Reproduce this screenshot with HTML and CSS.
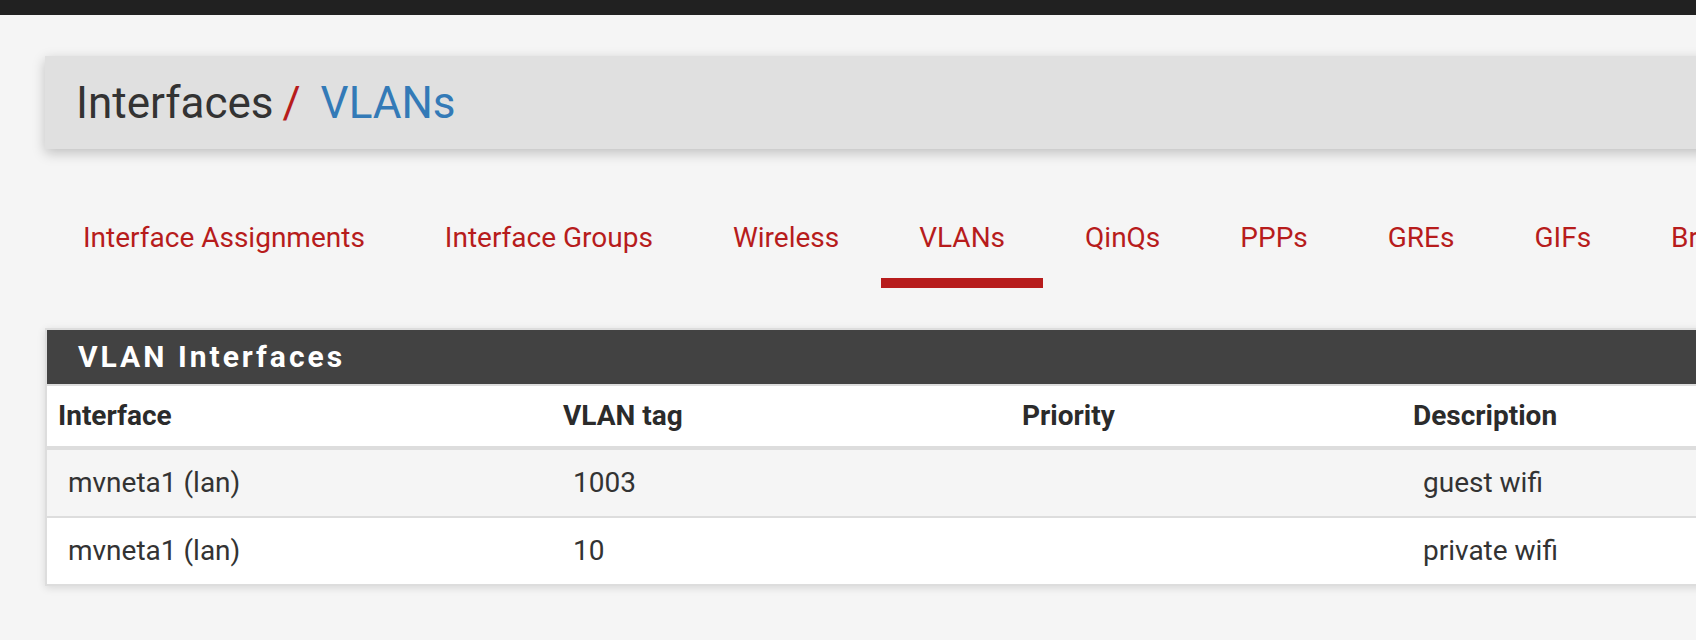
FILE: index.html
```html
<!DOCTYPE html>
<html lang="en">
<head>
    <meta charset="UTF-8">
    <title>Interfaces: VLANs</title>
    <link rel="stylesheet" href="styles.css">
</head>
<body>
<div class="topbar"></div>
<div class="content">
    <div class="page-header">
        <h1 class="breadcrumb">
            <span>Interfaces</span><span class="crumb-sep">/&nbsp;</span><a class="crumb-current" href="#">VLANs</a>
        </h1>
    </div>

    <ul class="tabs">
        <li><a href="#">Interface Assignments</a></li>
        <li><a href="#">Interface Groups</a></li>
        <li><a href="#">Wireless</a></li>
        <li><a class="active" href="#">VLANs</a></li>
        <li><a href="#">QinQs</a></li>
        <li><a href="#">PPPs</a></li>
        <li><a href="#">GREs</a></li>
        <li><a href="#">GIFs</a></li>
        <li><a href="#">Bridges</a></li>
        <li><a href="#">LAGGs</a></li>
    </ul>

    <div class="panel">
        <div class="panel-heading">VLAN Interfaces</div>
        <table class="vlan-table">
            <colgroup>
                <col class="col-if">
                <col class="col-tag">
                <col class="col-prio">
                <col class="col-desc">
                <col>
            </colgroup>
            <thead>
                <tr>
                    <th>Interface</th>
                    <th>VLAN tag</th>
                    <th>Priority</th>
                    <th>Description</th>
                    <th>Actions</th>
                </tr>
            </thead>
            <tbody>
                <tr>
                    <td>mvneta1 (lan)</td>
                    <td>1003</td>
                    <td></td>
                    <td>guest wifi</td>
                    <td></td>
                </tr>
                <tr>
                    <td>mvneta1 (lan)</td>
                    <td>10</td>
                    <td></td>
                    <td>private wifi</td>
                    <td></td>
                </tr>
            </tbody>
        </table>
    </div>
</div>
</body>
</html>
```

FILE: styles.css
```css
* { margin: 0; padding: 0; box-sizing: border-box; }
body { width: 1696px; height: 640px; overflow: hidden; background: #f5f5f5; font-family: Roboto, "Liberation Sans", sans-serif; color: #333; }
a { text-decoration: none; }

.topbar { height: 15px; background: #212121; }
.content { width: 1800px; margin-left: 45px; padding-top: 41px; }

/* breadcrumb bar */
.page-header { height: 93px; display: flex; align-items: center; padding-left: 31px; background: #e0e0e0; box-shadow: 0 4px 12px rgba(0,0,0,0.22); }
.breadcrumb { font-size: 44px; font-weight: normal; line-height: 1; color: #333; white-space: nowrap; }
.crumb-sep { color: #b71c1c; padding: 0 9px; }
.crumb-current { color: #337ab7; }

/* tabs */
.tabs { display: flex; gap: 4px; margin-top: 49px; list-style: none; white-space: nowrap; }
.tabs a { display: block; padding: 20px 38px; font-size: 28px; line-height: 40px; color: #b71c1c; border-bottom: 10px solid transparent; }
.tabs a.active { border-bottom-color: #b71c1c; }

/* panel + table */
.panel { margin-top: 40px; background: #fff; border: 2px solid #ddd; box-shadow: 0 2px 8px rgba(0,0,0,0.12); }
.panel-heading { height: 56px; line-height: 54px; padding-left: 31px; background: #424242; color: #fff; font-size: 30px; font-weight: bold; letter-spacing: 3px; border-bottom: 2px solid #ddd; }

.vlan-table { width: 100%; table-layout: fixed; border-collapse: separate; border-spacing: 0; font-size: 28px; line-height: 40px; }
.col-if { width: 505px; }
.col-tag { width: 459px; }
.col-prio { width: 391px; }
.col-desc { width: 300px; }
.vlan-table th { padding: 10px 11px; text-align: left; font-weight: bold; color: #2b2b2b; border-bottom: 4px solid #ddd; white-space: nowrap; }
.vlan-table td { padding: 13px 11px 13px 21px; vertical-align: middle; white-space: nowrap; }
.vlan-table tbody tr:nth-child(odd) td { background: #f5f5f5; }
.vlan-table tbody tr + tr td { border-top: 2px solid #ddd; }
```
